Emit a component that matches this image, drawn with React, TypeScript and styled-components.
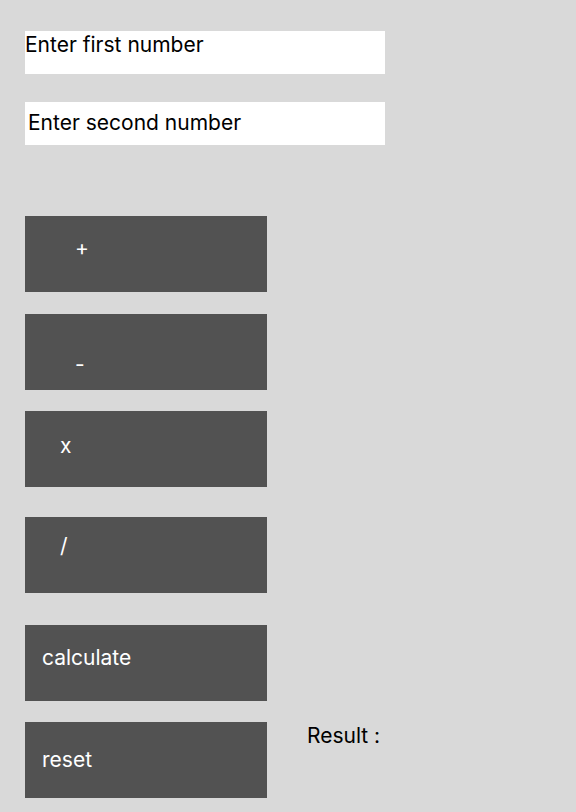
import styled, { createGlobalStyle } from "styled-components";

const GlobalStyle = createGlobalStyle`
  html, body {
    margin: 0;
    padding: 0;
    background: #d9d9d9;
  }
  * {
    box-sizing: border-box;
  }
`;

// весь калькулятор
const Page = styled.div`
  min-height: 812px;
  padding: 31px 0 0 25px;
  font-family: Inter, "Noto Sans", sans-serif;
  font-size: 21px;
  line-height: 25px;
  display: flex;
  flex-direction: column;
`;

const Inputs = styled.div`
  display: flex;
  flex-direction: column;
  gap: 28px;
`;

const NumberInput = styled.input<{ $pt: number; $pl: number }>`
  width: 360px;
  height: 43px;
  border: none;
  outline: none;
  background: #ffffff;
  font-family: inherit;
  font-size: 21px;
  line-height: 25px;
  color: #000;
  padding: ${(p) => p.$pt}px 0 ${(p) => 18 - p.$pt}px ${(p) => p.$pl}px;
  &::placeholder {
    color: #000;
    opacity: 1;
  }
`;

const Buttons = styled.div`
  display: flex;
  flex-direction: column;
  margin-top: 71px;
`;

const OpButton = styled.button<{ $pt: number; $pl: number; $mt?: number }>`
  width: 242px;
  height: 76px;
  margin-top: ${(p) => p.$mt ?? 0}px;
  border: none;
  background: #525252;
  color: #ffffff;
  font-family: inherit;
  font-size: 21px;
  line-height: 25px;
  text-align: left;
  display: flex;
  align-items: flex-start;
  padding: ${(p) => p.$pt}px 0 0 ${(p) => p.$pl}px;
  cursor: pointer;
`;

const BottomRow = styled.div`
  display: flex;
  align-items: flex-start;
  gap: 40px;
  margin-top: 21px;
`;

const Result = styled.div`
  margin-top: 1px;
  color: #000;
`;

export default function App() {
  return (
    <>
      <GlobalStyle />
      <Page>
        <Inputs>
          <NumberInput $pt={1} $pl={0} placeholder="Enter first number" />
          <NumberInput $pt={8} $pl={3} placeholder="Enter second number" />
        </Inputs>

        <Buttons>
          <OpButton $pt={19} $pl={50}>+</OpButton>
          <OpButton $mt={22} $pt={38} $pl={50}>-</OpButton>
          <OpButton $mt={21} $pt={22} $pl={35}>x</OpButton>
          <OpButton $mt={30} $pt={16} $pl={35}>/</OpButton>
          <OpButton $mt={32} $pt={20} $pl={17}>calculate</OpButton>
          <BottomRow>
            <OpButton $pt={25} $pl={17}>reset</OpButton>
            <Result>Result :</Result>
          </BottomRow>
        </Buttons>
      </Page>
    </>
  );
}
